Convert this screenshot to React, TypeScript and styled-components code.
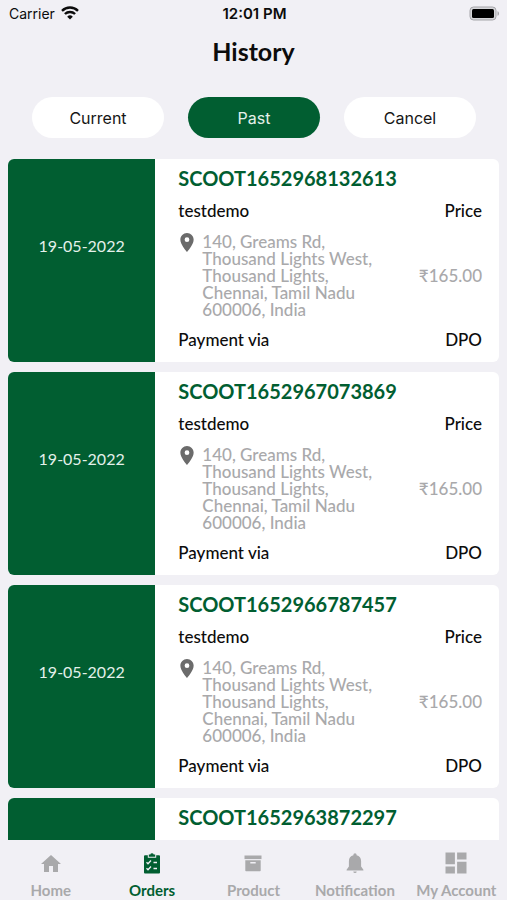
import React from "react";
import styled, { createGlobalStyle } from "styled-components";

const GREEN = "#015e31";
const GREY = "#a9a9ab";

const GlobalStyle = createGlobalStyle`
  * { box-sizing: border-box; }
  body { margin: 0; background: #f1f0f5; font-family: Lato, "Noto Sans", sans-serif; color: #0c0c0c; }
  button { font: inherit; border: 0; cursor: pointer; }
`;

const Screen = styled.div`
  display: flex;
  flex-direction: column;
  height: 100vh;
`;

const StatusBar = styled.div`
  display: grid;
  grid-template-columns: 1fr auto 1fr;
  align-items: center;
  height: 26px;
  padding: 0 7px 0 9px;
  font: 14px Inter, sans-serif;
`;

const Carrier = styled.span`
  display: flex;
  align-items: center;
  gap: 6px;
`;

const Clock = styled.span`
  font-weight: 600;
  font-size: 15px;
`;

const BatteryIcon = styled.svg`
  justify-self: end;
`;

const Title = styled.h1`
  margin: 0;
  height: 54px;
  font-size: 25px;
  line-height: 50px;
  font-weight: 700;
  text-align: center;
`;

const Filters = styled.div`
  display: flex;
  gap: 24px;
  padding: 17px 31px 21px 32px;
`;

const FilterButton = styled.button<{ $active?: boolean }>`
  flex: 1;
  height: 41px;
  border-radius: 21px;
  background: ${(p) => (p.$active ? GREEN : "#fff")};
  color: ${(p) => (p.$active ? "#e4f1ea" : "#161616")};
  font: 16px Inter, sans-serif;
`;

const OrderList = styled.main`
  flex: 1;
  min-height: 0;
  overflow-y: auto;
  scrollbar-width: none;
  display: flex;
  flex-direction: column;
  gap: 10px;
  padding: 0 8px;
`;

const Card = styled.article`
  flex: none;
  display: grid;
  grid-template-columns: 30% 1fr;
  border-radius: 6px;
  overflow: hidden;
  background: #fff;
`;

const DatePanel = styled.time`
  display: flex;
  align-items: center;
  justify-content: center;
  padding-bottom: 30px;
  background: ${GREEN};
  color: #e4f1ea;
  font-size: 16px;
`;

const Details = styled.div`
  padding: 7px 17px 10px 23px;
`;

const OrderId = styled.h2`
  margin: 0 0 9px;
  font-size: 20px;
  line-height: 24px;
  font-weight: 700;
  color: ${GREEN};
`;

const Row = styled.div`
  display: flex;
  align-items: center;
  justify-content: space-between;
  font-size: 17px;
  line-height: 24px;
  font-weight: 500;
`;

const AddressRow = styled(Row)`
  margin: 10px 0;
  color: ${GREY};
  line-height: 17px;
`;

const Address = styled.address`
  display: flex;
  gap: 8px;
  width: 206px;
  padding-left: 2px;
  font-style: normal;

  svg { flex: none; color: #6b6b6b; }
`;

const TabBar = styled.nav`
  display: grid;
  grid-template-columns: repeat(5, 1fr);
  height: 60px;
`;

const Tab = styled.a<{ $active?: boolean }>`
  display: flex;
  flex-direction: column;
  align-items: center;
  gap: 6px;
  padding-top: 12px;
  color: ${(p) => (p.$active ? GREEN : GREY)};
  font-size: 15px;
  line-height: 20px;
  font-weight: 700;
  text-decoration: none;
  white-space: nowrap;
`;

const WifiIcon = () => (
  <svg width="18" height="14" viewBox="0 0 18 14" fill="none" stroke="#0c0c0c" strokeWidth="2.4" aria-hidden="true">
    <path d="M1 4.8a11.5 11.5 0 0 1 16 0M3.9 8a7.4 7.4 0 0 1 10.2 0" />
    <path d="M9 13.6 6.2 10.7a4 4 0 0 1 5.6 0z" fill="#0c0c0c" stroke="none" />
  </svg>
);

const Battery = () => (
  <BatteryIcon width="31" height="15" viewBox="0 0 31 15" role="img" aria-label="Battery full">
    <rect x="1" y="1" width="26" height="13" rx="3.5" fill="#d6d6da" stroke="#a5a5a9" />
    <rect x="3" y="3" width="22" height="9" rx="1.5" fill="#000" />
    <path d="M28.5 5.2c2 .6 2 4 0 4.6z" fill="#a5a5a9" />
  </BatteryIcon>
);

const PinIcon = () => (
  <svg width="14" height="19" viewBox="5 2 14 20" fill="currentColor" aria-hidden="true">
    <path d="M12 2C8.130 2 5 5.130 5 9c0 5.250 7 13 7 13s7-7.750 7-13c0-3.870-3.130-7-7-7zm0 9.500a2.500 2.500 0 0 1 0-5 2.500 2.500 0 0 1 0 5z" />
  </svg>
);

const TabIcon = ({ children }: { children: React.ReactNode }) => (
  <svg width="22" height="22" viewBox="0 0 22 22" fill="currentColor" aria-hidden="true">{children}</svg>
);

const HomeIcon = () => (
  <TabIcon>
    <path d="M9 20v-6h4v6h5v-8h3L11 3 1 12h3v8z" />
  </TabIcon>
);

const ClipboardIcon = () => (
  <TabIcon>
    <path d="M4 3.200h2.800v2.600h8.400V3.200H18a1 1 0 0 1 1 1v16.300a1 1 0 0 1-1 1H4a1 1 0 0 1-1-1V4.200a1 1 0 0 1 1-1z" />
    <path d="M7.800 4.800V2.500h1.500a1.750 1.750 0 0 1 3.400 0h1.500v2.300z" />
    <path d="M5.500 10.200 7 11.700l3-3.200M5.500 16.200 7 17.700l3-3.200M12.500 10.500h3.500M12.500 16.500h3.500" fill="none" stroke="#f1f0f5" strokeWidth="1.300" />
  </TabIcon>
);

const ArchiveIcon = () => (
  <TabIcon>
    <path d="M2.500 3.500h17v3.600h-17z" />
    <path d="M3.300 8.200h15.400v10.300a.8.8 0 0 1-.8.8H4.100a.8.8 0 0 1-.8-.8zm5 1.700v1.500h5.400V9.900z" fillRule="evenodd" />
  </TabIcon>
);

const BellIcon = () => (
  <TabIcon>
    <path d="M11 1.200a1.600 1.600 0 0 0-1.600 1.600v.5C6.500 4 4.900 6.200 4.900 9.200v5.300L2.600 17.800v.7h16.800v-.7l-2.300-3.300V9.200c0-3-1.600-5.200-4.500-5.900v-.5A1.600 1.600 0 0 0 11 1.200z" />
    <path d="M9.300 19.400h3.400a1.700 1.700 0 0 1-3.400 0z" />
  </TabIcon>
);

const DashboardIcon = () => (
  <TabIcon>
    <path d="M.5.500h9.400v11.700H.5zM12.100.500h9.400v7.100h-9.400zM.500 14.400h9.400v7.100H.500zM12.100 9.800h9.400v11.700h-9.400z" />
  </TabIcon>
);

const orders = ["SCOOT1652968132613", "SCOOT1652967073869", "SCOOT1652966787457", "SCOOT1652963872297"];

const tabs = [
  { label: "Home", icon: <HomeIcon /> },
  { label: "Orders", icon: <ClipboardIcon />, active: true },
  { label: "Product", icon: <ArchiveIcon /> },
  { label: "Notification", icon: <BellIcon /> },
  { label: "My Account", icon: <DashboardIcon /> },
];

const OrderCard = ({ id }: { id: string }) => (
  <Card>
    <DatePanel dateTime="2022-05-19">19-05-2022</DatePanel>
    <Details>
      <OrderId>{id}</OrderId>
      <Row><span>testdemo</span><span>Price</span></Row>
      <AddressRow>
        <Address>
          <PinIcon />
          <span>140, Greams Rd, Thousand Lights West, Thousand Lights, Chennai, Tamil Nadu 600006, India</span>
        </Address>
        <span>₹165.00</span>
      </AddressRow>
      <Row><span>Payment via</span><span>DPO</span></Row>
    </Details>
  </Card>
);

export default function App() {
  return (
    <Screen>
      <GlobalStyle />
      <StatusBar>
        <Carrier>Carrier <WifiIcon /></Carrier>
        <Clock>12:01 PM</Clock>
        <Battery />
      </StatusBar>
      <Title>History</Title>
      <Filters>
        <FilterButton>Current</FilterButton>
        <FilterButton $active aria-pressed="true">Past</FilterButton>
        <FilterButton>Cancel</FilterButton>
      </Filters>
      <OrderList>
        {orders.map((id) => <OrderCard key={id} id={id} />)}
      </OrderList>
      <TabBar>
        {tabs.map((t) => (
          <Tab key={t.label} href="#" $active={t.active} aria-current={t.active ? "page" : undefined}>
            {t.icon}
            {t.label}
          </Tab>
        ))}
      </TabBar>
    </Screen>
  );
}
